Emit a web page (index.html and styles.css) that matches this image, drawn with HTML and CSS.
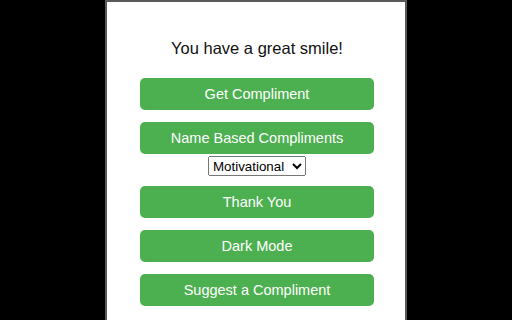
FILE: index.html
```html
<!DOCTYPE html>
<html lang="en">
<head>
	<meta charset="UTF-8">
	<title>Compliments</title>
	<link rel="stylesheet" href="styles.css">
</head>
<body>
	<div class="popup">
		<h2 id="compliment">You have a great smile!</h2>
		<button class="btn">Get Compliment</button>
		<button class="btn">Name Based Compliments</button>
		<select class="category">
			<option>Motivational</option>
			<option>Funny</option>
			<option>Romantic</option>
		</select>
		<button class="btn">Thank You</button>
		<button class="btn">Dark Mode</button>
		<button class="btn">Suggest a Compliment</button>
	</div>
</body>
</html>
```

FILE: styles.css
```css
html, body {
	margin: 0;
	height: 100%;
	background-color: #000;
	overflow: hidden;
}
.popup {
	width: 298px;
	min-height: 340px;
	margin: 0 auto;
	padding-top: 35px;
	background-color: #fff;
	border: 2px solid #5a5a5a;
	border-bottom: none;
	display: flex;
	flex-direction: column;
	align-items: center;
	font-family: "Liberation Sans", Arial, sans-serif;
}
h2 {
	margin: 0 0 19px 2px;
	font-size: 16.5px;
	font-weight: normal;
	line-height: 22px;
	color: #111;
}
.btn {
	width: 234px;
	height: 32px;
	margin: 0 0 12px 2px;
	border: none;
	border-radius: 5px;
	background-color: #4caf50;
	color: #fff;
	font-family: "Liberation Sans", Arial, sans-serif;
	font-size: 14.5px;
	cursor: pointer;
}
.btn:hover {
	background-color: #45a049;
}
.category {
	width: 98px;
	height: 20px;
	margin: -10px 0 10px 2px;
	font-family: "Liberation Sans", Arial, sans-serif;
	font-size: 13.33px;
}
```
